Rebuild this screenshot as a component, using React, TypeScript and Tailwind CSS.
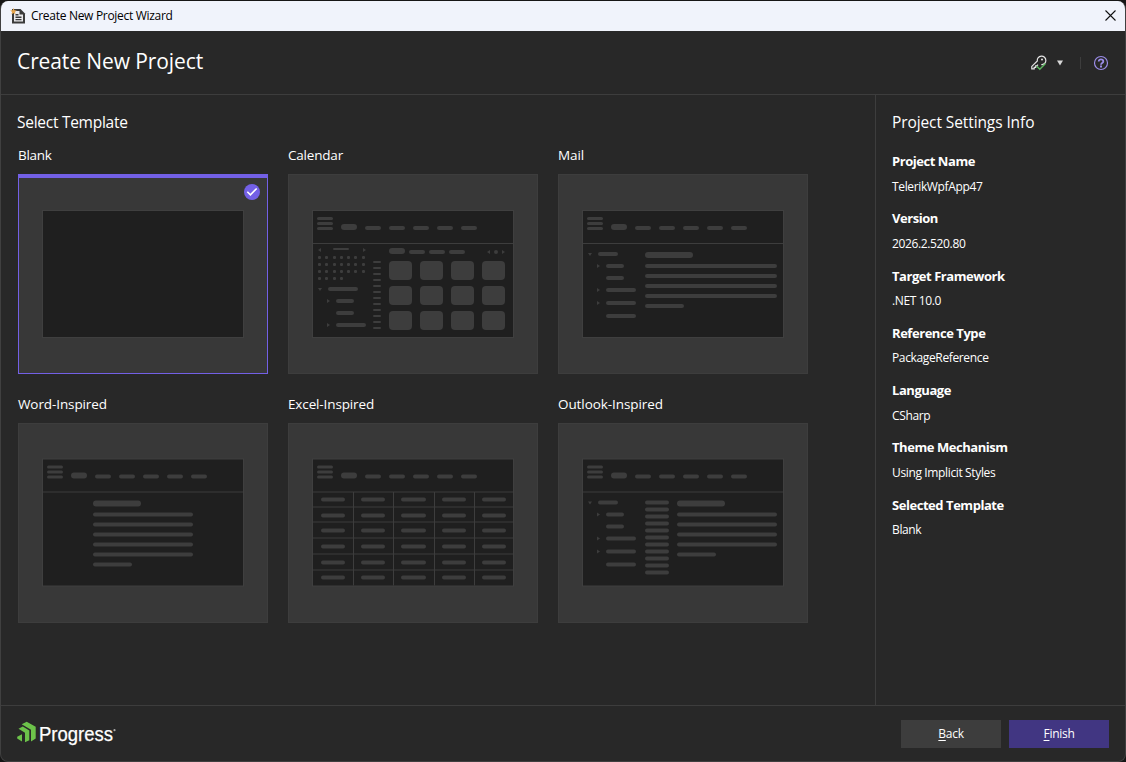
import React from 'react';

type Bar = [x: number, y: number, width: number, height: number];
type TemplateId = 'blank' | 'calendar' | 'mail' | 'word' | 'excel' | 'outlook';

interface Template {
    id: TemplateId;
    label: string;
    tracking: string;
}

const topRow: Template[] = [
    { id: 'blank', label: 'Blank', tracking: 'tracking-[-0.3px]' },
    { id: 'calendar', label: 'Calendar', tracking: 'tracking-[-0.2px]' },
    { id: 'mail', label: 'Mail', tracking: 'tracking-[-0.1px]' },
];

const bottomRow: Template[] = [
    { id: 'word', label: 'Word-Inspired', tracking: 'tracking-[-0.1px]' },
    { id: 'excel', label: 'Excel-Inspired', tracking: 'tracking-[-0.13px]' },
    { id: 'outlook', label: 'Outlook-Inspired', tracking: 'tracking-[-0.08px]' },
];

const settings = [
    { name: 'Project Name', value: 'TelerikWpfApp47' },
    { name: 'Version', value: '2026.2.520.80' },
    { name: 'Target Framework', value: '.NET 10.0' },
    { name: 'Reference Type', value: 'PackageReference' },
    { name: 'Language', value: 'CSharp' },
    { name: 'Theme Mechanism', value: 'Using Implicit Styles' },
    { name: 'Selected Template', value: 'Blank' },
];

// Rounded placeholder bars
const Bars = ({ items }: { items: Bar[] }) => (
    <>
        {items.map(([x, y, w, h], i) => (
            <rect key={i} x={x} y={y} width={w} height={h} rx={h / 2} />
        ))}
    </>
);

const Ribbon = () => (
    <>
        <Bars
            items={[
                [4, 6, 16, 3], [4, 11, 16, 3], [4, 16, 16, 3],
                [28, 13, 16, 6],
                [52, 15, 16, 4], [76, 15, 16, 4], [100, 15, 16, 4], [124, 15, 16, 4], [148, 15, 16, 4],
            ]}
        />
        <rect x="0" y="32" width="200" height="1" />
    </>
);

const FolderTree = () => (
    <>
        <path d="M5 42h4l-2 3zM14 53l3 2-3 2zM14 77l3 2-3 2zM14 90l3 2-3 2z" />
        <Bars
            items={[
                [15, 41, 20, 4], [23, 53, 18, 4], [23, 65, 18, 4],
                [23, 77, 30, 4], [23, 90, 30, 4], [23, 103, 30, 4],
            ]}
        />
    </>
);

const Paragraph = ({ x, width, lines }: { x: number; width: number; lines: number }) => (
    <Bars
        items={[
            [x, 41, 48, 6],
            ...Array.from({ length: lines }, (_, i): Bar => [x, 53 + i * 10, width, 4]),
            [x, 53 + lines * 10, 39, 4],
        ]}
    />
);

const CalendarArt = () => (
    <>
        <path d="M8 37v4l-3-2zM50 37l3 2-3 2zM5 77h4l-2 3zM14 88l3 2-3 2zM14 112l3 2-3 2zM177 39v4l-3-2zM189 39l3 2-3 2z" />
        <Bars
            items={[
                [20, 37, 16, 2],
                [15, 76, 30, 4], [23, 88, 18, 4], [23, 100, 18, 4], [23, 112, 30, 4],
                [76, 37, 16, 6], [96, 39, 16, 4], [116, 39, 16, 4], [136, 39, 16, 4],
                [181, 39, 4, 4],
            ]}
        />
        {[45, 52, 59, 66].map((y, row) =>
            [5, 12, 20, 27, 34, 41, 49]
                .slice(0, row === 3 ? 4 : 7)
                .map((x) => <rect key={`${x}-${y}`} x={x} y={y} width="3" height="3" rx="1" />)
        )}
        <Bars items={Array.from({ length: 12 }, (_, i): Bar => [60, 50 + i * 6, 8, 2])} />
        {[50, 75, 100].map((y) =>
            [76, 107, 138, 169].map((x) => (
                <rect key={`${x}-${y}`} x={x} y={y} width="23" height="19" rx="4" />
            ))
        )}
    </>
);

const ExcelArt = () => (
    <>
        {[47, 62, 78, 94, 110].map((y) => (
            <rect key={y} x="0" y={y} width="200" height="1" />
        ))}
        {[40, 80, 121, 161].map((x) => (
            <rect key={x} x={x} y="32.5" width="1" height="93.5" />
        ))}
        {[38, 54, 69, 85, 101, 116].map((y) => (
            <Bars key={y} items={[[8, y, 24, 4], [48, y, 24, 4], [88, y, 25, 4], [129, y, 24, 4], [169, y, 24, 4]]} />
        ))}
    </>
);

const Thumbnail = ({ id, dy }: { id: TemplateId; dy: number }) => (
    <svg width="202" height="130" viewBox="-1 -2 202 130" fill="#3d3d3d">
        <g transform={`translate(0 ${dy})`}>
            <rect x="-0.5" y="-0.5" width="201" height="127" fill="#1f1f1f" stroke="#3f3f3f" />
            {id !== 'blank' && <Ribbon />}
            {id === 'calendar' && <CalendarArt />}
            {id === 'mail' && (
                <>
                    <FolderTree />
                    <Paragraph x={62} width={132} lines={4} />
                </>
            )}
            {id === 'word' && <Paragraph x={50} width={100} lines={5} />}
            {id === 'excel' && <ExcelArt />}
            {id === 'outlook' && (
                <>
                    <FolderTree />
                    <Bars items={Array.from({ length: 11 }, (_, i): Bar => [62, 41 + i * 7, 24, 4])} />
                    <Paragraph x={94} width={100} lines={4} />
                </>
            )}
        </g>
    </svg>
);

const TemplateCard = ({ template, dy = 0 }: { template: Template; dy?: number }) => {
    const selected = template.id === 'blank';
    return (
        <div className="w-[250px]">
            <h3 className={`h-5 text-[13.5px] leading-5 whitespace-nowrap ${template.tracking}`}>{template.label}</h3>
            <div
                className={`relative mt-[9px] flex h-[200px] justify-center bg-[#383838] ${
                    selected ? 'border border-t-4 border-[#7360e6] pt-[31px]' : 'border border-[#3d3d3d] pt-[34px]'
                }`}
            >
                <Thumbnail id={template.id} dy={dy} />
                {selected && (
                    <svg className="absolute top-[6px] right-[7px]" width="16" height="16" viewBox="0 0 16 16">
                        <circle cx="8" cy="8" r="8" fill="#7360e6" />
                        <path d="M3.3 7.8l3.100 3 6.300-6.300" fill="none" stroke="#fff" strokeWidth="1.600" />
                    </svg>
                )}
            </div>
        </div>
    );
};

const DocumentIcon = () => (
    <svg width="16" height="16" viewBox="0 0 16 16">
        <path d="M2 1h8.500l4.500 4.500V15.500H2z" fill="#3b3b3b" />
        <path d="M4 3h5.500v3.500h3.500v7h-9z" fill="#e9e9ec" />
        <path d="M5.500 6.800h3M5.500 9.200h6M5.500 11.600h6" stroke="#3b3b3b" strokeWidth="1.400" />
        <path d="M3.500 0l.9 2.300 2.400.1-1.900 1.600.7 2.500-2.100-1.400-2.100 1.400.7-2.500L.2 2.400l2.400-.1z" fill="#e8a64c" />
    </svg>
);

const KeyIcon = () => (
    <svg width="16" height="16" viewBox="0 0 16 16" fill="none">
        <path
            d="M7 9.700L5.900 10.800H4.700v1.500H3.200v1.600H.8v-2.500L6.300 6A4.300 4.300 0 1 1 10.300 9.700"
            stroke="#e4e4e4"
            strokeWidth="1.200"
        />
        <circle cx="11" cy="4.500" r="1" fill="#e4e4e4" />
        <path d="M5.800 11.200l3 3 5.700-5.700" stroke="#5cb85f" strokeWidth="1.400" />
    </svg>
);

const HelpIcon = () => (
    <svg width="16" height="16" viewBox="0 0 16 16" fill="none" stroke="#9b8ce8">
        <circle cx="8" cy="8" r="6.500" strokeWidth="1.200" />
        <path d="M5.700 6.500c0-3 4.600-2.900 4.600 0 0 1.500-2.300 1.600-2.300 3.200" strokeWidth="1.800" />
        <path d="M8 10.600v1.800" strokeWidth="2" />
    </svg>
);

const ProgressLogo = () => (
    <svg width="100" height="26" viewBox="0 0 100 26">
        <g fill="#6cc24a">
            <path d="M4.700 3.300L9.700.8l9 5v11.600L14 20.400V8.700z" />
            <path d="M1.500 7.700l4.300-2.200 6.500 4v9.700L8 21.300v-9.500z" />
            <path d="M.2 15.800L5 13.200v7.200L.2 17.600z" />
        </g>
        <text
            x="22"
            y="20"
            fill="#fff"
            stroke="#fff"
            strokeWidth=".25"
            fontSize="19.500"
            fontFamily="'Liberation Sans', sans-serif"
            textLength="74"
            lengthAdjust="spacingAndGlyphs"
        >
            Progress
        </text>
        <circle cx="97.500" cy="9.200" r="1.100" fill="#aaa" />
    </svg>
);

export default function App() {
    return (
        <div className="h-[762px] w-[1126px] bg-[#161616] pt-px font-['Open_Sans','Noto_Sans',sans-serif] text-white">
            <div className="flex h-[761px] flex-col overflow-hidden rounded-lg border-x border-b border-[#404040] bg-[#282828]">
                {/* Title bar */}
                <div className="flex h-[30px] shrink-0 items-center bg-[#f0f3fb] pr-[9px] pl-[9px] text-black">
                    <DocumentIcon />
                    <span className="ml-[5px] text-[12px] tracking-[-0.3px]">Create New Project Wizard</span>
                    <svg className="mb-px ml-auto" width="11" height="11" viewBox="0 0 11 11" stroke="#111" strokeWidth="1.1">
                        <path d="M.5.5l10 10M10.500.5l-10 10" />
                    </svg>
                </div>

                {/* Header */}
                <header className="flex h-16 shrink-0 items-center border-b border-[#3d3d3d] px-4">
                    <h1 className="mb-[3px] text-[21px] leading-8 tracking-[-0.1px]">Create New Project</h1>
                    <div className="ml-auto flex items-center">
                        <div className="mt-px">
                            <KeyIcon />
                        </div>
                        <svg className="ml-[9px]" width="8" height="6" viewBox="0 0 8 6">
                            <path d="M1 .5h6l-3 5z" fill="#d8d8d8" />
                        </svg>
                        <div className="ml-4 h-3 w-px bg-[#3d3d3d]" />
                        <div className="ml-3">
                            <HelpIcon />
                        </div>
                    </div>
                </header>

                <div className="flex min-h-0 flex-1">
                    <main className="flex-1 pt-[15px] pl-4">
                        <h2 className="h-6 text-[15.500px] leading-6 tracking-[-0.27px]">Select Template</h2>
                        <div className="mt-[11px] flex gap-5 pl-px">
                            {topRow.map((t) => (
                                <TemplateCard key={t.id} template={t} />
                            ))}
                        </div>
                        <div className="mt-5 flex gap-5 pl-px">
                            {bottomRow.map((t) => (
                                <TemplateCard key={t.id} template={t} dy={-0.5} />
                            ))}
                        </div>
                    </main>

                    <aside className="w-[250px] shrink-0 border-l border-[#3d3d3d] pt-[15px] pl-4">
                        <h2 className="mb-[17px] h-6 text-[15.500px] leading-6 tracking-[-0.1px]">Project Settings Info</h2>
                        {settings.map((s) => (
                            <div key={s.name} className="h-[57.300px]">
                                <p className="h-5 text-[13px] leading-5 font-bold tracking-[-0.45px]">{s.name}</p>
                                <p className="mt-[6.500px] text-[12px] leading-[18px] tracking-[-0.36px]">{s.value}</p>
                            </div>
                        ))}
                    </aside>
                </div>

                {/* Footer */}
                <footer className="flex h-14 shrink-0 items-center border-t border-[#3d3d3d] px-4">
                    <ProgressLogo />
                    <div className="ml-auto flex gap-2 text-[12px] tracking-[-0.3px]">
                        <button className="h-7 w-[100px] bg-[#3d3d3d]">
                            <span className="underline underline-offset-2">B</span>ack
                        </button>
                        <button className="h-7 w-[100px] bg-[#413682]">
                            <span className="underline underline-offset-2">F</span>inish
                        </button>
                    </div>
                </footer>
            </div>
        </div>
    );
}
